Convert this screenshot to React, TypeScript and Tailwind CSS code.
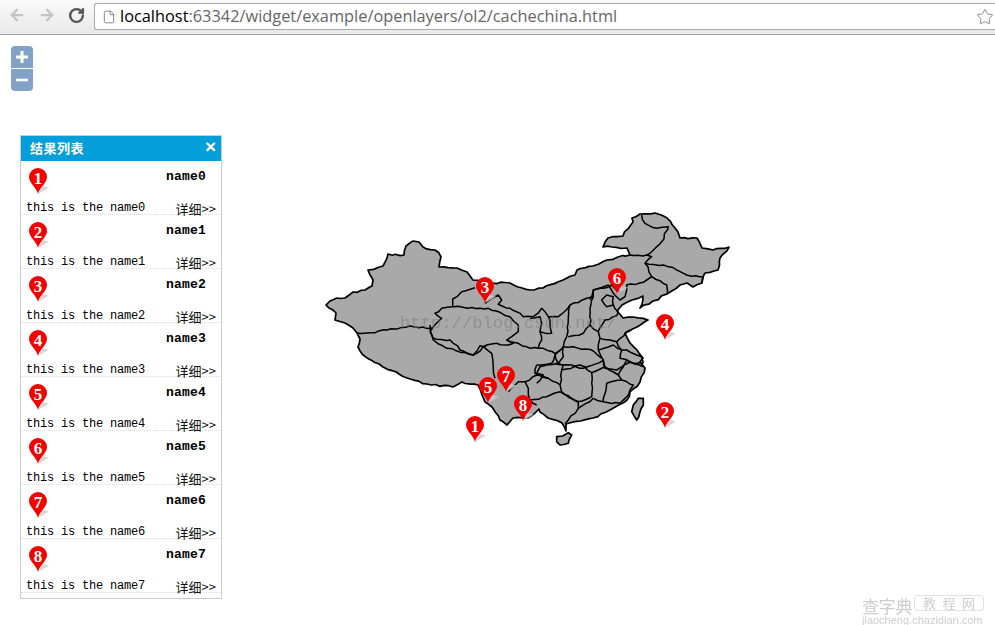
import React from "react";
import { ArrowLeft, ArrowRight, RotateCw, Star, File } from "lucide-react";

// zoom crop coords (3x) to page coords
const z = (ox: number, oy: number, pts: string) =>
  pts
    .split(" ")
    .map((p) => {
      const [x, y] = p.split(",").map(Number);
      return `${(ox + x / 3).toFixed(1)},${(oy + y / 3).toFixed(1)}`;
    })
    .join(" ");

// break long segments up so the borders look like the jagged map tiles
const rough = (pts: string) => {
  const list = pts.split(" ").map((p) => p.split(",").map(Number));
  const out: string[] = [];
  let k = 1;
  list.forEach(([x, y], i) => {
    out.push(`${x},${y}`);
    const next = list[i + 1];
    if (!next) return;
    const steps = Math.floor(Math.hypot(next[0] - x, next[1] - y) / 4);
    for (let s = 1; s < steps; s++) {
      const a = Math.sin(++k * 12.9898) * 43758.5453;
      const b = Math.sin(++k * 78.233) * 12543.123;
      const jx = (a - Math.floor(a) - 0.5) * 1.9;
      const jy = (b - Math.floor(b) - 0.5) * 1.9;
      const t = s / steps;
      out.push(`${(x + (next[0] - x) * t + jx).toFixed(1)},${(y + (next[1] - y) * t + jy).toFixed(1)}`);
    }
  });
  return out.join(" ");
};

const outline =
  "326,305 330,301 337,298 345,298 353,292 365,290 372,286 373,280 368,270 383,266 388,254 404,255 406,246 413,241 419,242 423,247 435,250 441,257 439,267 457,268 467,272 473,280 492,283 510,283 518,287 530,290 543,288 563,280 575,275 577,270 593,266 607,260 618,257 630,255 627,248 612,247 603,247 608,238 623,236 633,222 632,218 640,214 655,213 667,218 675,228 680,238 697,238 702,248 713,250 729,247 720,258 718,270 705,273 702,283 693,287 687,283 680,285 667,294 653,301 640,308 643,296 632,300 622,305 617,311 623,318 633,317 648,320 637,327 625,333 630,343 637,350 643,358 640,362 645,368 640,382 630,392 627,400 610,410 593,418 573,422 566,424 566,431 562,423 548,418 540,412 539,409 534,414 528,418 513,418 507,425 500,420 492,407 485,402 482,395 478,385 462,382 453,387 427,384 407,378 383,367 363,355 358,347 360,339 357,333 353,328 345,323 335,320 336,313 326,305";

const hainan = z(480, 350, "230,260 248,258 265,248 275,255 265,280 240,285 230,275 230,260");
const taiwan = z(480, 350, "475,145 490,145 490,165 470,210 455,185 460,165 475,145");

const borders = [
  // xinjiang / tibet / qinghai / gansu
  "357,333 367,333 387,330 410,326 432,328",
  z(430, 275, "135,38 95,50 68,72 68,95"),
  z(430, 275, "0,170 10,155 35,130 15,115 35,100 70,95 150,100 175,100 210,112 240,125 265,150 265,170 245,185 230,195 250,205 225,210 200,205 160,215"),
  z(430, 275, "0,170 10,190 60,195 90,225 130,240 150,212 160,215 185,235 190,280 195,310"),
  z(340, 325, "270,0 280,45 320,70 400,90 440,60"),
  // inner mongolia south edge
  z(430, 275, "165,85 185,70 205,60 215,75 205,88 240,100 280,125 310,125 335,100 345,110 355,125 385,125 420,90 470,70 490,65 490,45 520,40 545,30 570,50"),
  // north east
  z(530, 205, "300,150 350,150 365,155 345,175 365,215 410,240 412,268"),
  z(530, 205, "345,175 400,180 440,195 470,210 520,215 515,235"),
  z(530, 205, "335,30 345,55 380,70 415,65 395,110 350,150"),
  z(530, 205, "365,215 340,232 290,240 285,275 270,285 250,265 235,240 190,255 180,285"),
  // ningxia, shaanxi, shanxi
  z(430, 275, "300,130 330,125 335,145 330,170 365,175 360,150 355,125"),
  z(430, 275, "230,195 265,205 300,220 325,220 335,195 330,170"),
  z(430, 275, "420,90 415,130 410,185 400,215 375,235 340,220 325,220"),
  z(430, 275, "490,65 480,100 480,150 460,175 415,185"),
  z(430, 275, "480,150 505,170"),
  // beijing, tianjin
  z(430, 275, "520,70 530,60 550,65 550,90 530,95 515,75 520,70"),
  z(430, 275, "550,90 565,110 560,122"),
  // shandong, henan, hubei
  z(430, 275, "505,170 525,135 560,122"),
  z(430, 275, "505,170 510,190 540,195 560,200 590,170 600,165"),
  z(430, 275, "400,215 430,215 490,228 515,250"),
  z(430, 275, "400,215 400,245 385,265 460,280 520,255 525,280"),
  z(430, 275, "510,190 505,225 520,255 525,280 560,285 600,262 640,265"),
  z(430, 275, "560,200 575,225 590,225 620,240 635,245 640,265"),
  z(430, 275, "505,225 550,210 575,225 570,250 600,262"),
  z(430, 275, "375,235 385,265 350,270 330,275 320,295 340,300 320,325"),
  // south
  z(480, 350, "170,45 215,40 225,15 240,0"),
  z(480, 350, "225,40 250,45 245,60 300,45 335,68 335,100 335,140 290,155 245,125 240,105 245,60"),
  z(480, 350, "335,68 375,50 415,75 425,90 380,100 370,145 370,155"),
  z(480, 350, "340,145 370,155 420,160 445,135 460,105 425,90"),
  z(480, 350, "415,75 430,50 440,30 490,50"),
  z(480, 350, "170,165 150,150 200,140 240,125 295,155 295,175 265,210 255,222"),
  z(480, 350, "295,175 340,145"),
  z(480, 350, "135,95 145,115 150,150"),
  z(480, 350, "85,125 115,95 135,95 170,75 205,85 240,105"),
  z(480, 350, "170,45 165,70 205,85"),
];

const mapPins = [
  { n: 1, cls: "left-[466px] top-[416px]" },
  { n: 2, cls: "left-[656px] top-[402px]" },
  { n: 3, cls: "left-[476px] top-[277px]" },
  { n: 4, cls: "left-[656px] top-[314px]" },
  { n: 7, cls: "left-[497px] top-[366px]" },
  { n: 5, cls: "left-[479px] top-[377px]" },
  { n: 6, cls: "left-[608px] top-[268px]" },
  { n: 8, cls: "left-[514px] top-[395px]" },
];

function Pin({ n }: { n: number }) {
  return (
    <div className="relative w-[18px] h-[26px]">
      <svg width="32" height="28" viewBox="0 0 32 28" className="absolute left-0 top-0">
        <path d="M9 26 L20 19.5 L13 18 Z" fill="#cccccc" opacity="0.8" />
        <path d="M9 26 C8 20 0 15 0 9 A9 9 0 0 1 18 9 C18 15 10 20 9 26 Z" fill="#f40000" />
      </svg>
      <span className="absolute left-0 top-[2px] w-[18px] text-center text-[17px] leading-[17px] font-bold text-white [font-family:'Liberation_Serif',serif]">
        {n}
      </span>
    </div>
  );
}

function ChromeBar() {
  return (
    <div className="flex items-start h-[35px] bg-gradient-to-b from-[#fafafa] to-[#e9e9e9] border-b border-[#a3a3a3]">
      <div className="flex items-center h-[30px] pl-[8px] gap-[12px] w-[94px] text-[#c4c4c4]">
        <ArrowLeft size={18} strokeWidth={3} />
        <ArrowRight size={18} strokeWidth={3} />
        <RotateCw size={17} strokeWidth={3.4} className="text-[#555555]" />
      </div>
      <div className="flex items-center flex-1 h-[27px] mt-[3px] bg-white border border-[#ababab] border-r-0 rounded-l-[3px] pl-[7px]">
        <File size={14} strokeWidth={1.5} className="text-[#777777]" />
        <span className="ml-[4px] text-[16.35px] text-[#666666] whitespace-nowrap [font-family:'Open_Sans',sans-serif]">
          <span className="text-black">localhost</span>:63342/widget/example/openlayers/ol2/cachechina.html
        </span>
        <Star size={18} strokeWidth={1.3} className="ml-auto mr-[1px] text-[#8a8a8a]" />
      </div>
    </div>
  );
}

function ZoomControl() {
  return (
    <div className="flex flex-col w-[22px] text-white">
      <div className="flex items-center justify-center h-[23px] bg-[#82a2c8] rounded-t-[4px] border-b border-white">
        <svg width="14" height="14" viewBox="0 0 14 14">
          <path d="M7 1 V13 M1 7 H13" stroke="#fff" strokeWidth="3" />
        </svg>
      </div>
      <div className="flex items-center justify-center h-[22px] bg-[#82a2c8] rounded-b-[4px]">
        <svg width="14" height="14" viewBox="0 0 14 14">
          <path d="M1 7 H13" stroke="#fff" strokeWidth="2.6" />
        </svg>
      </div>
    </div>
  );
}

function ResultItem({ i }: { i: number }) {
  return (
    <div className="flex flex-col h-[54px] border-b border-dotted border-[#dddddd]">
      <div className="flex shrink-0 justify-between h-[38px]">
        <div className="pl-[8px] pt-[7px]">
          <Pin n={i + 1} />
        </div>
        <div className="w-[55px] pt-[8px] text-[13px] leading-[15px] font-bold text-black tracking-[0.2px] [font-family:'Liberation_Mono',monospace]">
          name{i}
        </div>
      </div>
      <div className="flex shrink-0 justify-between pl-[5px] pr-[5px]">
        <span className="pt-[2px] text-[12px] leading-[15px] tracking-[-0.2px] text-black [font-family:'Liberation_Mono',monospace]">
          this is the name{i}
        </span>
        <span className="text-[13px] leading-[17px] pt-[1px] text-[#111111] [font-family:'Noto_Sans_CJK_SC',sans-serif]">
          详细&gt;&gt;
        </span>
      </div>
    </div>
  );
}

function ResultPanel() {
  return (
    <div className="w-[202px] mt-[44px] ml-[9px] pb-[5px] bg-white border border-[#cccccc]">
      <div className="flex items-center justify-between h-[25px] pl-[9px] pr-[5px] bg-[#049edb] text-white font-bold">
        <span className="text-[13px] -mt-[1px] tracking-[0.5px] [font-family:'Noto_Sans_CJK_SC',sans-serif]">结果列表</span>
        <span className="text-[19px] leading-none -mt-[5px] [font-family:'Liberation_Sans',sans-serif]">×</span>
      </div>
      {[0, 1, 2, 3, 4, 5, 6, 7].map((i) => (
        <ResultItem key={i} i={i} />
      ))}
    </div>
  );
}

export default function App() {
  return (
    <div className="relative w-[995px] h-[625px] overflow-hidden bg-white">
      <ChromeBar />

      {/* map canvas */}
      <svg width="995" height="625" viewBox="0 0 995 625" className="absolute left-0 top-0">
        <g fill="#a9a9a9" stroke="#000" strokeWidth="1.7" strokeLinejoin="round">
          <polygon points={rough(outline)} />
          <polygon points={rough(hainan)} />
          <polygon points={rough(taiwan)} />
        </g>
        <g fill="none" stroke="#000" strokeWidth="1.5" strokeLinejoin="round">
          {borders.map((b, i) => (
            <polyline key={i} points={rough(b)} />
          ))}
        </g>
      </svg>
      <div className="absolute left-[400px] top-[313px] text-[17.2px] leading-[22px] text-[#777777] opacity-50 whitespace-nowrap [font-family:'Liberation_Mono',monospace]">
        http://blog.csdn.net/
      </div>
      {mapPins.map((p) => (
        <div key={p.n} className={"absolute " + p.cls}>
          <Pin n={p.n} />
        </div>
      ))}

      <div className="relative pl-[11px] pt-[11px]">
        <ZoomControl />
        <ResultPanel />
      </div>

      {/* site watermark */}
      <div className="absolute left-[862px] top-[595px] w-[122px] text-[#cdcdcd] blur-[0.5px] [font-family:'Noto_Sans_CJK_SC',sans-serif]">
        <div className="flex items-start h-[19px]">
          <span className="text-[17px] leading-[17px] mt-[2px] tracking-[-0.3px] whitespace-nowrap">查字典</span>
          <span className="flex flex-1 justify-between ml-[2px] h-[16px] border border-[#e2e2e2] rounded-[3px] px-[8px] text-[13px] leading-[14px]">
            <span>教</span>
            <span>程</span>
            <span>网</span>
          </span>
        </div>
        <div className="text-[11px] leading-[12px] whitespace-nowrap [font-family:'Liberation_Sans',sans-serif]">
          jiaocheng.chazidian.com
        </div>
      </div>
    </div>
  );
}
